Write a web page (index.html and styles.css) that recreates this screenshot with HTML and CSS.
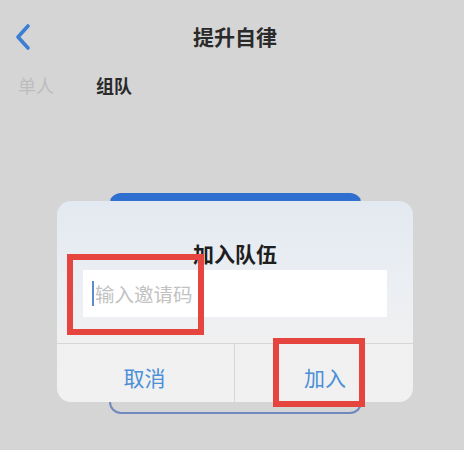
FILE: index.html
```html
<!DOCTYPE html>
<html lang="zh-CN">
<head>
    <meta charset="UTF-8">
    <meta name="viewport" content="width=device-width, initial-scale=1.0">
    <title>提升自律</title>
    <link rel="stylesheet" href="styles.css">
</head>
<body>

    <div class="nav">
        <div class="back">
            <svg width="18" height="28" viewBox="0 0 18 28">
                <path d="M14 3 L4 14 L14 25" fill="none" stroke="#3a7fd4" stroke-width="3.6" stroke-linecap="round" stroke-linejoin="round"/>
            </svg>
        </div>
        <div class="title">提升自律</div>
        <div></div>
    </div>

    <div class="tabs">
        <span class="tab">单人</span>
        <span class="tab active">组队</span>
    </div>

    <div class="card"></div>

    <!-- join team dialog -->
    <div class="dialog">
        <div class="dialog-title">加入队伍</div>
        <div class="code-input">
            <span class="caret"></span><span class="placeholder">输入邀请码</span>
        </div>
        <div class="actions">
            <button class="cancel">取消</button>
            <button class="join">加入</button>
        </div>
    </div>

    <!-- annotation boxes -->
    <div class="mark mark-input"></div>
    <div class="mark mark-join"></div>

</body>
</html>
```

FILE: styles.css
```css
* {
    margin: 0;
    padding: 0;
    box-sizing: border-box;
}

body {
    font-family: "Noto Sans CJK SC", "Noto Sans", sans-serif;
    background-color: #d5d5d5;
    color: #222;
    width: 464px;
    height: 450px;
    overflow: hidden;
    position: relative;
}

.nav {
    height: 72px;
    display: grid;
    grid-template-columns: 1fr auto 1fr;
    align-items: center;
}

.back {
    padding-left: 14px;
    padding-top: 2px;
    display: flex;
}

.title {
    font-size: 21px;
    font-weight: bold;
    color: #2a2a2a;
    padding-left: 6px;
}

.tabs {
    display: flex;
    gap: 42px;
    padding-left: 18px;
    height: 26px;
    align-items: center;
}

.tab {
    font-size: 18px;
    color: #bdbdbd;
}

.tab.active {
    color: #2a2a2a;
    font-weight: bold;
}

.card {
    width: 253px;
    height: 221px;
    margin: 95px 0 0 109px;
    border: 2px solid #7189bd;
    border-top: 9px solid #2f6fcf;
    border-radius: 12px;
}

.dialog {
    position: absolute;
    left: 57px;
    top: 201px;
    width: 356px;
    height: 201px;
    border-radius: 14px;
    background: linear-gradient(180deg, #e3e9f0 0%, #eaeef3 35%, #f0f0f1 70%, #f1f1f1 100%);
}

.dialog-title {
    padding-top: 39px;
    line-height: 26px;
    text-align: center;
    font-size: 21px;
    font-weight: bold;
    color: #1e1e1e;
}

.code-input {
    margin: 4px 26px 26px;
    height: 47px;
    background-color: #fff;
    display: flex;
    align-items: center;
    padding-left: 9px;
}

.caret {
    width: 2px;
    height: 25px;
    background-color: #5d8ad0;
    margin-right: 1px;
}

.placeholder {
    font-size: 19.5px;
    color: #c2c2c2;
}

.actions {
    display: grid;
    grid-template-columns: 1fr 1fr;
    height: 59px;
    border-top: 1px solid #d6d6d6;
}

.actions button {
    border: none;
    background: none;
    font-family: inherit;
    font-size: 21px;
    color: #4a8fd8;
    padding-top: 8px;
}

.actions .cancel {
    border-right: 1px solid #d6d6d6;
    padding-right: 2px;
}

.actions .join {
    padding-left: 2px;
}

.mark {
    position: absolute;
    border: 6px solid #e5453e;
}

.mark-input {
    left: 67px;
    top: 254px;
    width: 137px;
    height: 81px;
}

.mark-join {
    left: 273px;
    top: 338px;
    width: 92px;
    height: 69px;
}
```
